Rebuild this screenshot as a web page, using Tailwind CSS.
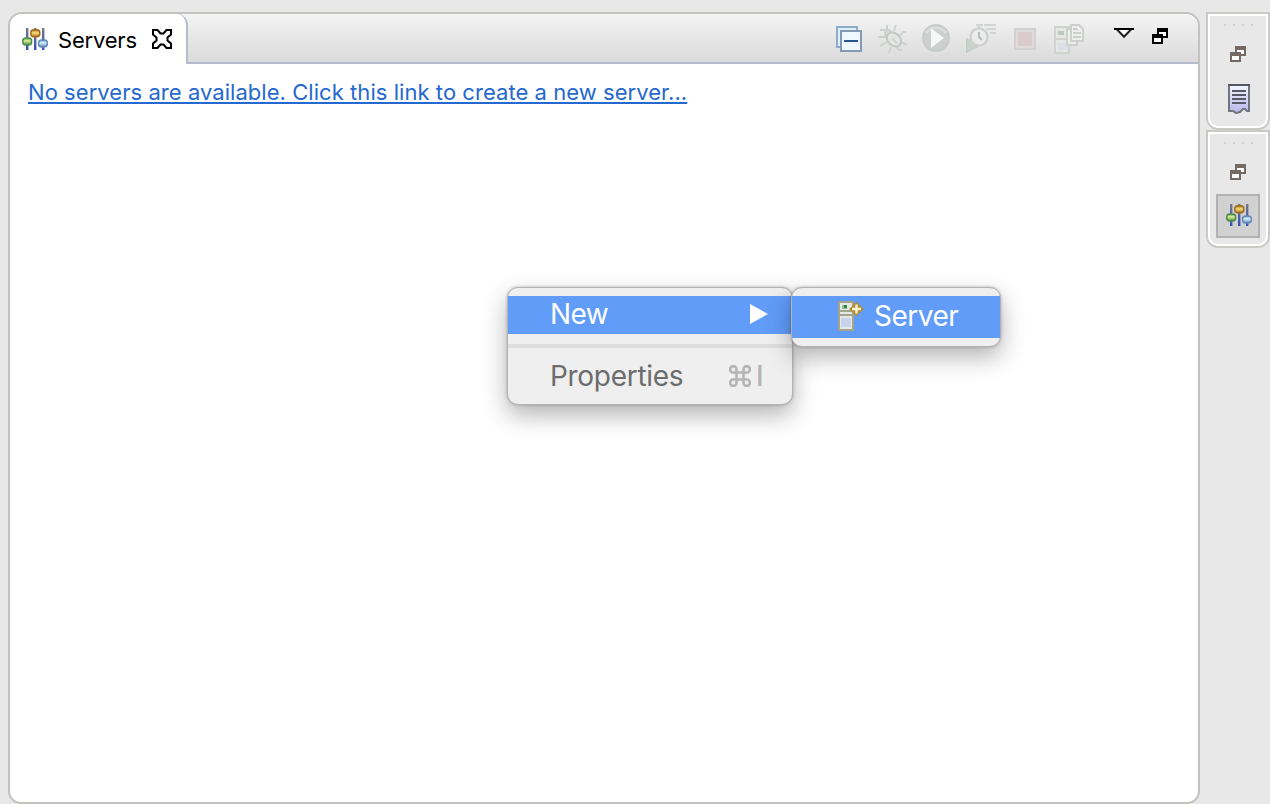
<!DOCTYPE html>
<html lang="en">
<head>
<meta charset="utf-8">
<title>Servers</title>
<script src="https://cdn.jsdelivr.net/npm/@tailwindcss/browser@4"></script>
</head>
<body class="h-[804px] w-[1270px] overflow-hidden bg-[#e8e8e8] font-['Inter','Liberation_Sans',sans-serif]">
<svg width="0" height="0" class="absolute">
  <defs>
    <linearGradient id="gold" x2="0" y2="1"><stop stop-color="#a87820"/><stop offset=".45" stop-color="#f8dc80"/><stop offset="1" stop-color="#a86c10"/></linearGradient>
    <linearGradient id="green" x2="0" y2="1"><stop stop-color="#5c9c48"/><stop offset=".4" stop-color="#e0f098"/><stop offset="1" stop-color="#438a3c"/></linearGradient>
    <linearGradient id="blue" x2="0" y2="1"><stop stop-color="#6c9cc8"/><stop offset=".4" stop-color="#d8f0fc"/><stop offset="1" stop-color="#5a88bc"/></linearGradient>
    <linearGradient id="rod" x2="0" y2="1"><stop stop-color="#77778a"/><stop offset="1" stop-color="#3450b8"/></linearGradient>
    <linearGradient id="page" x2="0" y2="1"><stop stop-color="#f6f6ff"/><stop offset="1" stop-color="#b4b6ea"/></linearGradient>
    <symbol id="sliders" viewBox="0 0 26 24">
      <g fill="url(#rod)"><rect x="4" y="1" width="2.400" height="22"/><rect x="12" y="1" width="2.400" height="22"/><rect x="20" y="1" width="2.400" height="22"/></g>
      <rect x=".8" y="11" width="8.800" height="7" rx="3" fill="url(#green)" stroke="#4d8a52" stroke-width="1.500"/>
      <rect x="8.800" y="2.800" width="9" height="7" rx="3" fill="url(#gold)" stroke="#a06c1c" stroke-width="1.500"/>
      <rect x="16.600" y="13" width="8.800" height="7" rx="3" fill="url(#blue)" stroke="#6288b8" stroke-width="1.500"/>
    </symbol>
    <symbol id="restore" viewBox="0 0 16 16">
      <path fill="currentColor" d="M5 0h11v10h-5v6H0V6h5z"/>
      <path fill="#fff" d="M7 4h7v4h-3V6H7zM2 10h7v4H2z"/>
    </symbol>
  </defs>
</svg>
<div class="flex h-full pl-2 pt-3">
  <main class="flex h-[792px] w-[1192px] flex-col overflow-hidden rounded-t-[14px] rounded-b-[13px] border-2 border-[#c2c2bf] bg-white">
    <header class="flex h-[50px] shrink-0 bg-linear-to-b from-[#f4f4f4] to-[#d9d9d9]">
      <div class="flex h-[50px] w-[178px] shrink-0 items-center rounded-tr-[11px] border-r-2 border-[#b4bccd] bg-white pl-3">
        <svg class="h-6 w-[26px]"><use href="#sliders"/></svg>
        <span class="ml-[10px] mt-px w-[93px] whitespace-nowrap text-[22px] leading-[26px] tracking-[-0.2px] text-black">Servers</span>
        <svg class="h-[22px] w-[22px]" viewBox="0 0 22 22" fill="none" stroke="#000" stroke-width="2"><path d="M2 2H6.500L9.500 5.500H12.500L15.500 2H20V6.500L16.500 9.500V12.500L20 15.500V20H15.500L12.500 16.500H9.500L6.500 20H2V15.500L5.500 12.500V9.500L2 6.500Z"/></svg>
      </div>
      <div class="flex grow items-start border-b-2 border-[#b4bccd]">
        <svg class="ml-[648px] mt-3 h-[26px] w-[26px]" viewBox="0 0 26 26"><path fill="#d8f1fb" stroke="#91aac5" stroke-width="2" d="M1 1h20v20H1z"/><path fill="#eef9fe" stroke="#8798b5" stroke-width="2" d="M5 5h20v20H5z"/><path fill="#245a91" d="M8 14h14v2H8z"/></svg>
        <svg class="ml-4 mt-[10px] h-[30px] w-[30px]" viewBox="0 0 30 30" fill="none" stroke="#cdd1ce" stroke-width="2"><path d="M9 1v5M18 1l-2 6M2 6h5M0 13h8M2 22l7-4M11 29l2-6M18 22l3 4h3M23 18l6 3M22 12l3-4h3"/><circle cx="10" cy="9" r="3" fill="#dcdfdc"/><ellipse cx="16" cy="15.500" rx="8" ry="6" transform="rotate(42 16 15.500)" fill="#e4e6e4" stroke="#c3c8c4"/><path d="m14 14 5 5" stroke="#cfd2cf"/></svg>
        <svg class="ml-[14px] mt-[10px] h-7 w-7" viewBox="0 0 28 28"><circle cx="14" cy="14" r="13" fill="#ccd0ce" stroke="#c9cbc9" stroke-width="2"/><path d="M4 9a12 12 0 0 1 20 0" fill="none" stroke="#d9dcda" stroke-width="3"/><path fill="#f7f7f7" d="M9 4v20l13-10z"/></svg>
        <svg class="ml-4 mt-[10px] h-[30px] w-[30px]" viewBox="0 0 30 30"><path fill="#c8d1ca" stroke="#c2cac4" d="M.5 14.500V28.500L13 22z"/><circle cx="13" cy="13" r="8.500" fill="#ececec" stroke="#cfd1d0" stroke-width="2.500"/><path stroke="#d2d4d2" stroke-width="2" d="M10 1h7M13 1v4M18 1h12M20 5h10M24 9h6"/><path fill="none" stroke="#b5bcbd" stroke-width="2" d="M13 8v5l3 3"/></svg>
        <svg class="ml-[18px] mt-[14px] h-[22px] w-[22px]" viewBox="0 0 22 22"><path fill="#e0dbdb" stroke="#d1d1cf" stroke-width="2" d="M1 1h20v20H1z"/><path fill="#d9cacb" d="M4 4h14v14H4z"/></svg>
        <svg class="ml-[18px] mt-[10px] h-[30px] w-[30px]" viewBox="0 0 30 30"><path fill="#e5e6e5" stroke="#d0d3cf" stroke-width="2" d="M1 3h14v26H1z"/><path fill="#bdc9bf" d="M4 7h6v4H4z"/><path stroke="#d0d3cf" stroke-width="2" d="M2 15h12"/><path fill="#dde0e6" d="M4 19h9v7H4z"/><g fill="#eee" stroke="#cccfcc" stroke-width="2"><path d="M13 5h10v16H13z"/><path d="M17 1h8l4 4v12H17z"/></g><path stroke="#cccfcc" stroke-width="2" d="M19 5h5M19 9h8M19 13h8"/></svg>
        <svg class="ml-[30px] mt-[14px] h-[11px] w-5" viewBox="0 0 20 11"><path fill="#fff" stroke="#222" stroke-width="2" d="M2.500 1h15L10 8.800z"/><path fill="#000" d="M0 0h20v2H0z"/></svg>
        <svg class="ml-[18px] mt-[14px] h-4 w-4 text-black"><use href="#restore"/></svg>
      </div>
    </header>
    <div class="pl-[18px] pt-[14px]">
      <a href="#" class="block h-[26px] w-[659px] whitespace-nowrap text-[22px] leading-[28px] tracking-[0.05px] text-[#2468d0] underline decoration-2 underline-offset-[2px] [text-decoration-skip-ink:none]">No servers are available. Click this link to create a new server...</a>
    </div>
  </main>
  <aside class="ml-[6px] w-16 shrink-0">
    <section class="h-[118px] rounded-b-[12px] border-2 border-[#c9c9c5]">
      <div class="flex h-full flex-col items-center rounded-b-[10px] border-2 border-white pt-2">
        <div class="flex gap-[7px]"><i class="size-[2px] bg-[#d2d2ca]"></i><i class="size-[2px] bg-[#d2d2ca]"></i><i class="size-[2px] bg-[#d2d2ca]"></i><i class="size-[2px] bg-[#d2d2ca]"></i></div>
        <svg class="mt-5 h-4 w-4 text-[#756a63]"><use href="#restore"/></svg>
        <svg class="ml-[2px] mt-[22px] h-[30px] w-[22px]" viewBox="0 0 22 30"><path fill="url(#page)" stroke="#70767f" stroke-width="2" d="M1 1h20v26h-2l-2-2h-2l-3 3-4 1-3-2H1z"/><path fill="#51555f" d="M0 0h22v2H0z"/><path stroke="#555a66" stroke-width="2" d="M4 7h14M4 11h14M4 15h14M4 19h14"/></svg>
      </div>
    </section>
    <section class="h-[118px] rounded-b-[12px] border-2 border-[#c9c9c5]">
      <div class="flex h-full flex-col items-center rounded-b-[10px] border-2 border-white pt-2">
        <div class="flex gap-[7px]"><i class="size-[2px] bg-[#d2d2ca]"></i><i class="size-[2px] bg-[#d2d2ca]"></i><i class="size-[2px] bg-[#d2d2ca]"></i><i class="size-[2px] bg-[#d2d2ca]"></i></div>
        <svg class="mt-5 h-4 w-4 text-[#756a63]"><use href="#restore"/></svg>
        <div class="mt-[14px] flex h-11 w-11 shrink-0 items-center justify-center border-2 border-[#b1b1b1] bg-[#d1d1d1] pb-[2px] pl-[2px]"><svg class="h-6 w-[26px]"><use href="#sliders"/></svg></div>
      </div>
    </section>
  </aside>
</div>
<div class="absolute left-[507px] top-[287px] h-[118px] w-[286px] rounded-[11px] border border-[#b3b3b3] bg-[#efefef] pt-2 shadow-[0_10px_24px_rgba(0,0,0,0.3),0_0_3px_rgba(0,0,0,0.25)]">
  <div class="flex h-[38px] items-center justify-between bg-[#619cf9] pl-[42px] pr-6 text-[28px] leading-[36px] text-white"><span class="pb-[2px] tracking-[-0.6px]">New</span>
    <svg class="mb-[2px] h-5 w-[18px]" viewBox="0 0 18 20"><path fill="#fff" d="M0 0v20l18-10z"/></svg></div>
  <div class="mt-[10px] h-1 bg-[#dedede]"></div>
  <div class="mt-[9px] flex h-[38px] items-center justify-between pl-[42px] pr-[31px] text-[28px] leading-[38px] text-[#6c6c6c]"><span class="tracking-[-0.3px]">Properties</span><span class="flex items-center gap-[5px] text-[#b5b5b5]">
    <svg class="h-[22px] w-[22px]" viewBox="0 0 22 22" fill="none" stroke="currentColor" stroke-width="2.600"><path d="M7.500 7.500h7v7h-7zM7.500 7.500H4.400A3.200 3.200 0 1 1 7.500 4.400zM14.500 7.500V4.400A3.200 3.200 0 1 1 17.600 7.500zM14.500 14.500h3.100A3.200 3.200 0 1 1 14.500 17.600zM7.500 14.500v3.100A3.200 3.200 0 1 1 4.400 14.500z"/></svg><span class="w-[5px] font-medium">I</span></span></div>
</div>
<div class="absolute left-[791px] top-[287px] h-[60px] w-[210px] rounded-[11px] border border-[#b3b3b3] bg-[#efefef] pt-2 shadow-[0_10px_24px_rgba(0,0,0,0.3),0_0_3px_rgba(0,0,0,0.25)]">
  <div class="flex h-[42px] items-center bg-[#619cf9] pl-[45px] text-[28px] leading-[40px] text-white">
    <svg class="mb-[2px] h-[30px] w-[27px]" viewBox="0 0 27 30"><path fill="#e5e9e5" stroke="#a5a48a" stroke-width="2" d="M2 1h14v28H2z"/><path fill="#8fbf92" d="M5 4h5v4H5z"/><path fill="#2c8440" d="M7 4h3v3H7z"/><path stroke="#a5a48a" stroke-width="2" d="M3 10h12M3 14h12"/><path fill="#c8d4ee" d="M4 17h10v9H4z"/><path fill="#b18b35" d="M19.500 0.500 23 4.500 27 8 23 11.500 19.500 15.500 16 11.500 12 8 16 4.500z"/><path stroke="#fff4cc" stroke-width="2.400" d="M19.500 3.500v9M15 8h9"/></svg>
    <span class="ml-[10px] pb-[2px] tracking-[-0.5px]">Server</span>
  </div>
</div>
</body>
</html>
